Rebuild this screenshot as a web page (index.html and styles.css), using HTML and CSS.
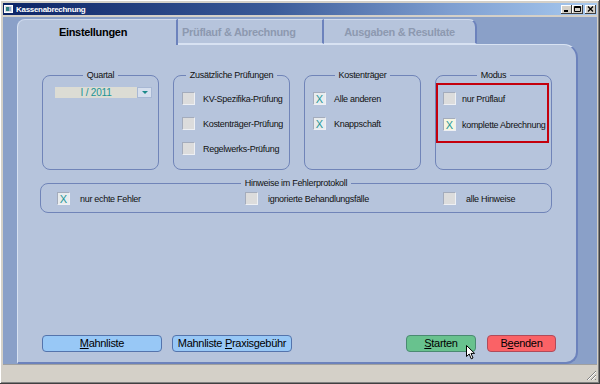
FILE: index.html
```html
<!DOCTYPE html>
<html lang="de">
<head>
    <meta charset="UTF-8">
    <meta name="viewport" content="width=device-width, initial-scale=1.0">
    <title>Kassenabrechnung</title>
    <link rel="stylesheet" href="styles.css">
</head>
<body>

    <div class="window">
        <div class="titlebar">
            <svg class="app-icon" width="9" height="8" viewBox="0 0 9 8">
                <rect x="0.5" y="0.5" width="8" height="7" fill="#d8dce4" stroke="#ffffff"/>
                <rect x="2" y="2" width="3" height="4" fill="#2f8080"/>
                <rect x="5" y="2" width="2" height="4" fill="#90a8cc"/>
            </svg>
            <span class="title">Kassenabrechnung</span>
            <div class="caption-buttons">
                <span class="cap-btn">
                    <svg width="7" height="6" viewBox="0 0 7 6"><rect x="1" y="4" width="4" height="2" fill="#000"/></svg>
                </span>
                <span class="cap-btn">
                    <svg width="7" height="6" viewBox="0 0 7 6"><path d="M0.5 0.5h6v5h-6z M0.5 1.5h6" fill="none" stroke="#000"/></svg>
                </span>
                <span class="cap-btn close">
                    <svg width="7" height="6" viewBox="0 0 7 6"><path d="M1 0.5l5 5 M6 0.5l-5 5" stroke="#000" stroke-width="1.3"/></svg>
                </span>
            </div>
        </div>

        <div class="frame">
            <!-- Tab strip -->
            <div class="tabs">
                <div class="tab tab-active">Einstellungen</div>
                <div class="tab tab-second">Prüflauf &amp; Abrechnung</div>
                <div class="tab tab-last">Ausgaben &amp; Resultate</div>
            </div>

            <div class="panel">
                <div class="groups">
                    <fieldset class="group">
                        <legend>Quartal</legend>
                        <div class="combo">
                            <span class="combo-value">I / 2011</span>
                            <span class="combo-button"><span class="combo-arrow"></span></span>
                        </div>
                    </fieldset>

                    <fieldset class="group">
                        <legend>Zusätzliche Prüfungen</legend>
                        <div class="options">
                            <label class="option"><span class="check"></span>KV-Spezifika-Prüfung</label>
                            <label class="option"><span class="check"></span>Kostenträger-Prüfung</label>
                            <label class="option"><span class="check"></span>Regelwerks-Prüfung</label>
                        </div>
                    </fieldset>

                    <fieldset class="group">
                        <legend>Kostenträger</legend>
                        <div class="options">
                            <label class="option"><span class="check checked">X</span>Alle anderen</label>
                            <label class="option"><span class="check checked">X</span>Knappschaft</label>
                        </div>
                    </fieldset>

                    <fieldset class="group group-modus">
                        <legend>Modus</legend>
                        <div class="modus-frame">
                            <label class="option"><span class="check"></span>nur Prüflauf</label>
                            <label class="option"><span class="check checked active">X</span>komplette Abrechnung</label>
                        </div>
                    </fieldset>
                </div>

                <fieldset class="group group-wide">
                    <legend>Hinweise im Fehlerprotokoll</legend>
                    <div class="hint-row">
                        <label class="option wide-gap"><span class="check checked">X</span>nur echte Fehler</label>
                        <label class="option wide-gap"><span class="check"></span>ignorierte Behandlungsfälle</label>
                        <label class="option wide-gap"><span class="check"></span>alle Hinweise</label>
                    </div>
                </fieldset>

                <div class="actions">
                    <button class="btn btn-blue btn-wide"><u>M</u>ahnliste</button>
                    <button class="btn btn-blue btn-wide btn-next">Mahnliste <u>P</u>raxisgebühr</button>
                    <button class="btn btn-green btn-start"><u>S</u>tarten</button>
                    <button class="btn btn-red btn-stop">B<u>e</u>enden</button>
                </div>
            </div>
        </div>

        <div class="statusbar">
            <svg class="grip" width="11" height="11" viewBox="0 0 11 11">
                <path d="M10 1L1 10 M10 5L5 10 M10 9L9 10" stroke="#808080" stroke-width="1"/>
                <path d="M10 2L2 10 M10 6L6 10" stroke="#ffffff" stroke-width="1"/>
            </svg>
        </div>

        <!-- mouse pointer over "Starten" -->
        <svg class="cursor" width="10" height="15" viewBox="0 0 10 15">
            <path d="M0.5 0.5V11.5L3.2 9L5.2 13.8L7 13L5 8.4H8.6Z" fill="#fff" stroke="#000" stroke-linejoin="round"/>
        </svg>
    </div>

</body>
</html>
```

FILE: styles.css
```css
body {
    margin: 0;
    font-family: 'Liberation Sans', Arial, sans-serif;
}
.window {
    position: relative;
    width: 600px;
    height: 384px;
    box-sizing: border-box;
    padding: 3px;
    display: flex;
    flex-direction: column;
    background: #d4d0c8;
    box-shadow: inset -1px -1px #404040, inset 1px 1px #ffffff, inset -2px -2px #808080;
}
/* Title bar */
.titlebar {
    height: 12px;
    margin-bottom: 2px;
    display: flex;
    align-items: center;
    padding: 0 1px 0 1px;
    background: linear-gradient(to right, #0c2466, #3a5a98 45%, #7e9ed0 75%, #a8caf0);
}
.app-icon {
    margin-right: 3px;
}
.title {
    color: #fff;
    font-size: 8px;
    font-weight: bold;
    letter-spacing: -0.3px;
}
.caption-buttons {
    margin-left: auto;
    display: flex;
}
.cap-btn {
    width: 11px;
    height: 9px;
    box-sizing: border-box;
    display: flex;
    align-items: center;
    justify-content: center;
    background: #d4d0c8;
    box-shadow: inset -1px -1px #404040, inset 1px 1px #ffffff;
}
.cap-btn.close {
    margin-left: 2px;
}
/* Client area */
.frame {
    flex: 1;
    display: flex;
    flex-direction: column;
    padding: 2px 19px 0 14px;
    background: #8aa0c8;
}
.tabs {
    display: flex;
    height: 25px;
}
.tab {
    box-sizing: border-box;
    height: 25px;
    background: #b6c4dc;
    border-top: 1px solid #d0dbee;
    border-bottom: 1px solid #d8e2f2;
    border-right: 2px solid #6c82bc;
    font-size: 11px;
    font-weight: bold;
    line-height: 25px;
    letter-spacing: -0.3px;
    color: #8d99b0;
    white-space: nowrap;
}
.tab-active {
    position: relative;
    z-index: 1;
    width: 161px;
    height: 26px;
    margin-bottom: -1px;
    border-left: 1px solid #d8e2f2;
    border-bottom: none;
    border-top-left-radius: 8px;
    padding-right: 8px;
    text-align: center;
    color: #000;
}
.tab-second {
    width: 146px;
    padding-left: 4px;
}
.tab-last {
    width: 153px;
    text-align: center;
    border-top-right-radius: 8px;
}
.panel {
    flex: 1;
    display: flex;
    flex-direction: column;
    box-sizing: border-box;
    padding: 25px 24px 10px 24px;
    background: #b6c4dc;
    border-left: 1px solid #d8e2f2;
    border-top: 1px solid #d8e2f2;
    border-right: 2px solid #6c82bc;
    border-bottom: 2px solid #6c82bc;
    border-radius: 0 14px 12px 0;
}
/* Group boxes */
.groups {
    display: flex;
    gap: 14px;
}
.group {
    margin: 0;
    padding: 0;
    min-width: 0;
    width: 117px;
    height: 100px;
    box-sizing: border-box;
    border: 1px solid #7084b8;
    border-radius: 8px;
}
.group legend {
    margin: 0 auto;
    padding: 0 4px;
    font-size: 9px;
    line-height: 11px;
    letter-spacing: -0.3px;
    color: #111;
}
.combo {
    display: flex;
    height: 11px;
    margin: 6px 0 0 12px;
    width: 97px;
}
.combo-value {
    flex: 1;
    background: #dcdcd4;
    color: #209494;
    font-size: 10px;
    line-height: 11px;
    letter-spacing: -0.2px;
    text-align: center;
}
.combo-button {
    width: 15px;
    box-sizing: border-box;
    display: flex;
    align-items: center;
    justify-content: center;
    background: #d6dfee;
    border: 1px solid #a8b8d4;
}
.combo-arrow {
    width: 0;
    height: 0;
    border-left: 3px solid transparent;
    border-right: 3px solid transparent;
    border-top: 3px solid #1c8a8a;
}
.options {
    display: flex;
    flex-direction: column;
    gap: 12px;
    padding: 11px 0 0 8px;
}
.option {
    display: flex;
    align-items: center;
    gap: 8px;
    height: 13px;
    font-size: 9px;
    letter-spacing: -0.3px;
    color: #111;
    white-space: nowrap;
}
.check {
    width: 13px;
    height: 13px;
    box-sizing: border-box;
    flex: none;
    display: flex;
    align-items: center;
    justify-content: center;
    background: #dcdcdc;
    border: 1px solid;
    border-color: #a4acbc #eef0f4 #eef0f4 #a4acbc;
    font-size: 11px;
    letter-spacing: 0;
    color: #1e9696;
}
.check.checked {
    background: #e8ecee;
}
.check.active {
    background: #f6f6e2;
}
.modus-frame {
    height: 60px;
    box-sizing: border-box;
    margin: 2px 2px 0 0;
    padding: 7px 0 0 5px;
    display: flex;
    flex-direction: column;
    gap: 13px;
    border: 2px solid #c4000c;
}
.modus-frame .option {
    gap: 6px;
}
.group-wide {
    width: 512px;
    height: 35px;
    margin: 8px 0 0 -2px;
}
.hint-row {
    display: grid;
    grid-template-columns: 188px 198px auto;
    padding: 3px 0 0 16px;
}
.option.wide-gap {
    gap: 10px;
}
/* Bottom buttons */
.actions {
    margin-top: auto;
    margin-right: -4px;
    display: flex;
}
.btn {
    height: 17px;
    box-sizing: border-box;
    padding: 0;
    border: 1px solid;
    border-radius: 4px;
    font-family: 'Liberation Sans', Arial, sans-serif;
    font-size: 11px;
    line-height: 15px;
    letter-spacing: -0.3px;
    color: #000;
    text-align: center;
}
.btn-wide {
    width: 120px;
}
.btn-next {
    margin-left: 10px;
}
.btn-blue {
    background: #98c8f6;
    border-color: #5474ac;
}
.btn-green {
    background: #68c28e;
    border-color: #4a8a72;
}
.btn-red {
    background: #fa6266;
    border-color: #b04a5a;
}
.btn-start {
    width: 70px;
    margin-left: auto;
}
.btn-stop {
    width: 69px;
    margin-left: 11px;
}
/* Status bar */
.statusbar {
    height: 17px;
    display: flex;
    justify-content: flex-end;
    align-items: flex-end;
    border-top: 1px solid #a0a0a0;
    box-sizing: border-box;
}
.cursor {
    position: absolute;
    left: 466px;
    top: 345px;
}
```
